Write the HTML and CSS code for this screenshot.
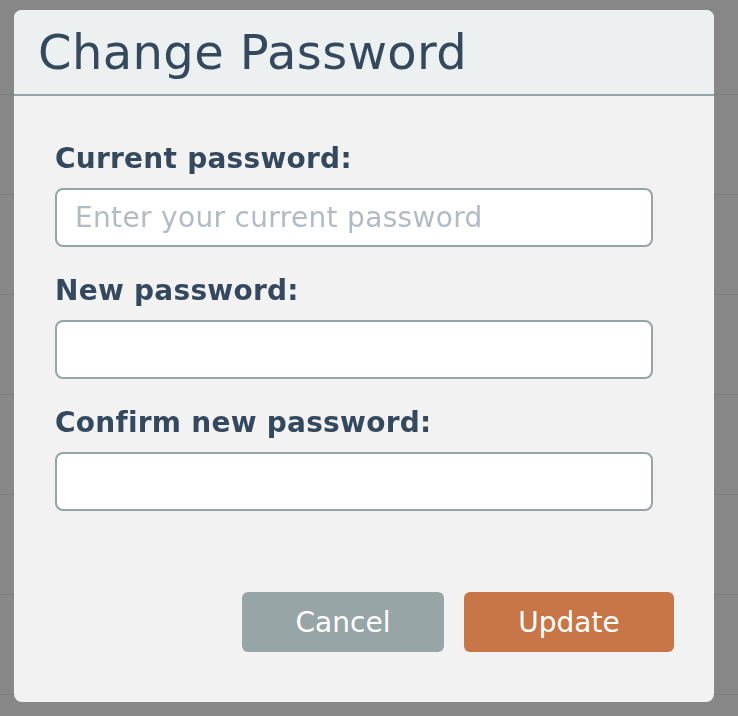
FILE: index.html
```html
<!DOCTYPE html>
<html lang="en">
<head>
    <meta charset="UTF-8">
    <meta name="viewport" content="width=device-width, initial-scale=1.0">
    <title>Change Password</title>
    <link rel="stylesheet" href="styles.css">
</head>
<body>

    <!-- Page content behind the dialog -->
    <div class="page">
        <div class="row row-head"></div>
        <div class="row"></div>
        <div class="row"></div>
        <div class="row"></div>
        <div class="row"></div>
        <div class="row"></div>
        <div class="row"></div>
    </div>

    <!-- Dialog overlay -->
    <div class="overlay">
        <div class="modal">
            <div class="modal-header">
                <h1>Change Password</h1>
            </div>
            <form class="modal-body">
                <label for="current_password">Current password:</label>
                <input type="password" id="current_password" name="current_password" placeholder="Enter your current password">

                <label for="new_password">New password:</label>
                <input type="password" id="new_password" name="new_password">

                <label for="confirm_password">Confirm new password:</label>
                <input type="password" id="confirm_password" name="confirm_password">

                <div class="actions">
                    <button type="button" class="btn btn-cancel">Cancel</button>
                    <button type="submit" class="btn btn-update">Update</button>
                </div>
            </form>
        </div>
    </div>
</body>
</html>
```

FILE: styles.css
```css
/* Base page */
body {
    margin: 0;
    font-family: "DejaVu Sans", Verdana, sans-serif;
    background-color: #878787;
    overflow: hidden;
}

/* Rows of the page underneath the overlay */
.row {
    height: 99px;
    border-bottom: 1px solid #7d7d7d;
}

.row-head {
    height: 94px;
}

/* Overlay holding the dialog */
.overlay {
    position: fixed;
    top: 0;
    left: 0;
    right: 0;
    bottom: 0;
}

.modal {
    width: 700px;
    margin: 10px 0 0 14px;
    background-color: #f2f2f2;
    border-radius: 8px;
    overflow: hidden;
}

/* Header with title */
.modal-header {
    background-color: #ecf0f1;
    border-bottom: 2px solid #95a5a6;
    padding: 14px 24px;
}

.modal-header h1 {
    margin: 0;
    font-size: 48px;
    line-height: 56px;
    font-weight: normal;
    letter-spacing: 0.4px;
    color: #34495e;
}

/* Form body */
.modal-body {
    display: flex;
    flex-direction: column;
    padding: 46px 40px 50px 41px;
}

label {
    font-size: 28px;
    line-height: 33px;
    font-weight: bold;
    letter-spacing: 0.25px;
    color: #34495e;
    margin-bottom: 13px;
}

label + input ~ label {
    margin-top: 27px;
}

input[type="password"] {
    width: 598px;
    height: 59px;
    box-sizing: border-box;
    padding: 0 18px;
    border: 2px solid #95a5a6;
    border-radius: 8px;
    background-color: #ffffff;
    font-family: inherit;
    font-size: 28px;
    letter-spacing: 0.33px;
    color: #34495e;
}

input::placeholder {
    color: #b2bbc4;
}

/* Buttons */
.actions {
    display: flex;
    justify-content: flex-end;
    gap: 20px;
    margin-top: 81px;
}

.btn {
    height: 60px;
    padding: 0;
    border: none;
    border-radius: 6px;
    font-family: inherit;
    font-size: 28px;
    color: #ffffff;
    cursor: pointer;
}

.btn-cancel {
    width: 202px;
    background-color: #97a5a6;
}

.btn-update {
    width: 210px;
    background-color: #c87647;
}
```
